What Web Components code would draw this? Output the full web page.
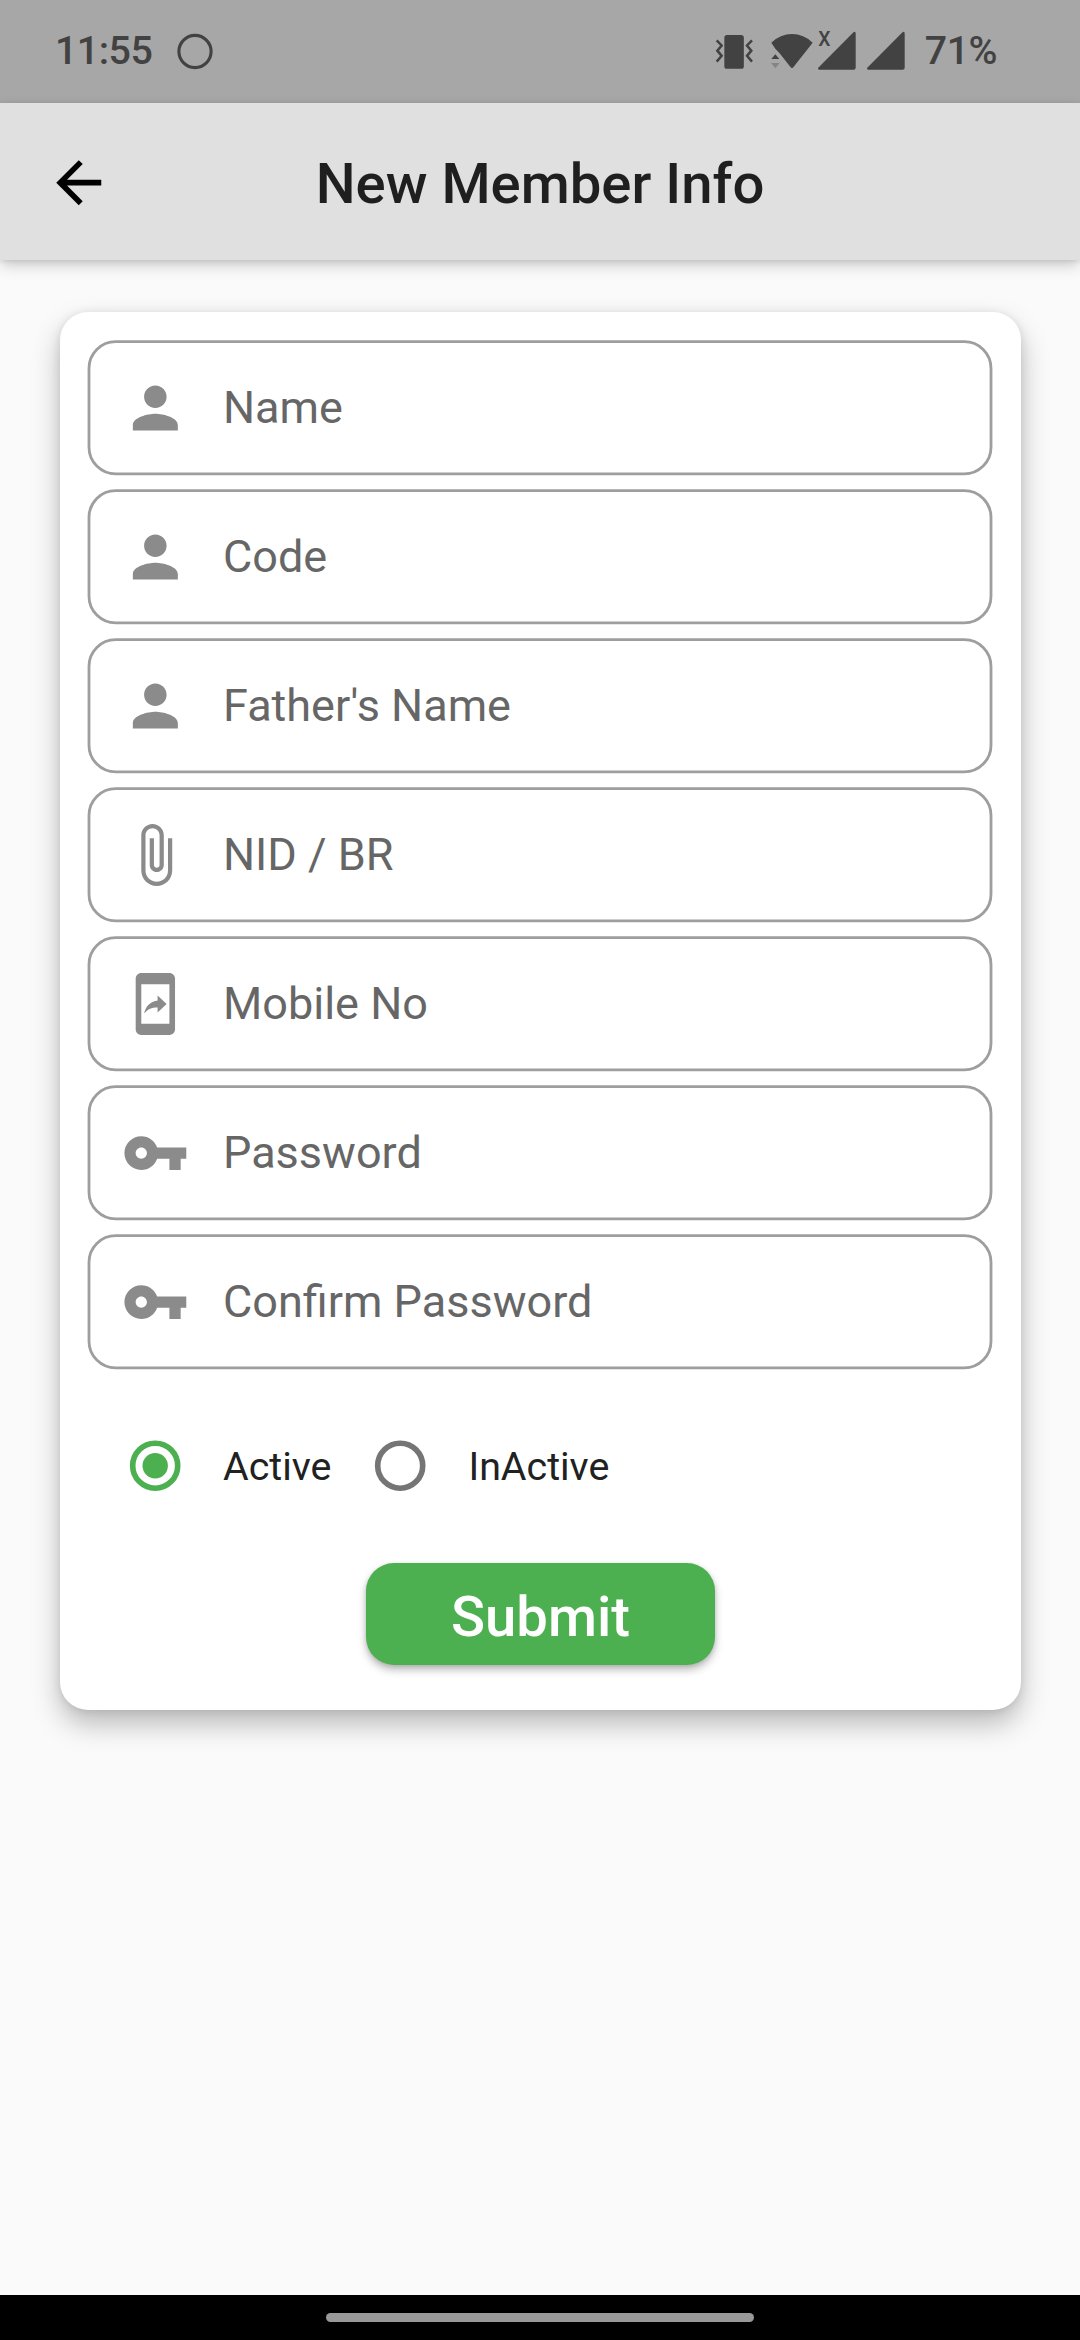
<!DOCTYPE html>
<html lang="en">
<head>
<meta charset="utf-8">
<title>New Member Info</title>
<style>
  html, body { margin: 0; height: 100%; }
  body { background: #fafafa; font-family: Roboto, "Liberation Sans", sans-serif; }
</style>
</head>
<body>
<member-screen></member-screen>
<script>
const define = (name, html, setup) => {
  const template = document.createElement('template');
  template.innerHTML = html;
  customElements.define(name, class extends HTMLElement {
    constructor() {
      super();
      this.attachShadow({ mode: 'open' }).append(template.content.cloneNode(true));
    }
    connectedCallback() { if (setup) setup(this, this.shadowRoot); }
  });
};

const ICONS = {
  person: 'M12 12c2.21 0 4-1.79 4-4s-1.79-4-4-4-4 1.79-4 4 1.79 4 4 4zm0 2c-2.67 0-8 1.34-8 4v2h16v-2c0-2.66-5.33-4-8-4z',
  attach: 'M16.5 6v11.5c0 2.21-1.79 4-4 4s-4-1.79-4-4V5c0-1.38 1.12-2.5 2.5-2.5s2.5 1.12 2.5 2.5v10.5c0 .55-.45 1-1 1s-1-.45-1-1V6H10v9.5c0 1.38 1.12 2.5 2.5 2.5s2.5-1.12 2.5-2.5V5c0-2.21-1.79-4-4-4S7 2.79 7 5v12.5c0 3.04 2.46 5.5 5.5 5.5s5.5-2.46 5.5-5.5V6h-1.5z',
  mobile: 'M17 1H7c-1.1 0-1.99.9-1.99 2v18c0 1.1.89 2 1.99 2h10c1.1 0 2-.9 2-2V3c0-1.1-.9-2-2-2zm0 18H7V5h10v14zm-4.2-5.78v1.75l3.2-2.99L12.8 9v1.7c-3.11.43-4.35 2.56-4.8 4.7 1.11-1.5 2.58-2.18 4.8-2.18z',
  key: 'M12.65 10C11.83 7.67 9.61 6 7 6c-3.31 0-6 2.69-6 6s2.69 6 6 6c2.61 0 4.83-1.67 5.65-4H17v4h4v-4h2v-4H12.65zM7 14c-1.1 0-2-.9-2-2s.9-2 2-2 2 .9 2 2-.9 2-2 2z',
  back: 'M20 11H7.83l5.59-5.59L12 4l-8 8 8 8 1.41-1.41L7.83 13H20v-2z'
};

customElements.define('md-icon', class extends HTMLElement {
  static get observedAttributes() { return ['name', 'dx', 'dy']; }
  constructor() {
    super();
    this.attachShadow({ mode: 'open' }).innerHTML = `
      <style>
        :host { display: block; width: 68px; height: 68px; flex: none; }
        svg { display: block; width: 68px; height: 68px; fill: currentColor; }
      </style>
      <svg viewBox="0 0 68 68"><path/></svg>`;
  }
  attributeChangedCallback() {
    const path = this.shadowRoot.querySelector('path');
    path.setAttribute('d', ICONS[this.getAttribute('name')] || '');
    path.setAttribute('transform', `translate(${this.getAttribute('dx') || 0} ${this.getAttribute('dy') || 0}) scale(2.8125)`);
  }
});

define('status-bar', `
  <style>
    :host { display: flex; align-items: center; height: 103px; box-sizing: border-box; padding: 0 83px 0 55px;
            background: #a7a7a7; color: #424242; font-size: 39.375px; font-weight: 500; line-height: 46px; letter-spacing: -.5px; }
    span { padding-bottom: 2px; }
    .clock { width: 100px; margin-right: 21px; }
    svg { display: block; }
    .system { margin-left: auto; margin-right: 17px; letter-spacing: 0; }
  </style>
  <span class="clock">11:55</span>
  <svg width="38" height="37" viewBox="0 0 38 37"><circle cx="19" cy="18.5" r="16.1" fill="none" stroke="currentColor" stroke-width="3.1"/></svg>
  <svg class="system" width="196" height="45" viewBox="66 87 588 135" fill="currentColor">
    <rect x="103" y="105" width="58.500" height="101.500" rx="8"/>
    <g fill="none" stroke="currentColor" stroke-width="7.500">
      <path d="M80 121l15 15.500L82 152l13 15.500L80 185"/>
      <path d="M186 121l-15 15.500L184 152l-13 15.500L186 185"/>
    </g>
    <path d="M244 128Q271 102 306 102T368 128L310 202Q306 207 302 202L270 161L256 146Z"/>
    <path d="M256 163l12 14h-24z"/>
    <path d="M256 205l13-16h-26z" fill="#858585"/>
    <path d="M384 204L489 98Q497 92 497 101V203Q497 209 491 209H388Q383 209 384 204Z"/>
    <path d="M531 204L636 98Q644 92 644 101V203Q644 209 638 209H535Q530 209 531 204Z"/>
    <text x="384.500" y="138" font-size="58" font-weight="500">X</text>
  </svg>
  <span>71%</span>`);

define('app-bar', `
  <style>
    :host { display: grid; grid-template-columns: 113px 1fr 113px; align-items: center; height: 157px; position: relative;
            background: #e0e0e0; box-shadow: 0 6px 14px -1px rgba(0,0,0,.2), 0 1px 5px rgba(0,0,0,.1); }
    md-icon { margin-left: 45px; color: #000; }
    h1 { margin: 0; padding-top: 5px; text-align: center; font-size: 56.25px; line-height: 66px; font-weight: 500;
         color: #1f1f1f; white-space: nowrap; }
  </style>
  <md-icon name="back" dx="0" dy=".9"></md-icon>
  <h1><slot></slot></h1>`);

define('text-field', `
  <style>
    :host { display: grid; width: 906px; height: 135px; }
    .outline, .content { grid-area: 1 / 1; }
    .outline { display: block; overflow: visible; }
    .content { display: flex; align-items: center; padding-left: 34px; color: #8b8b8b; }
    label { margin-left: 34px; color: #666; font-size: 45px; line-height: 52px; white-space: nowrap; }
  </style>
  <svg class="outline" width="906" height="136" viewBox="0 0 906 136"><rect x="2" y="1.7" width="902" height="132.2" rx="26.700" fill="none" stroke="#9e9e9e" stroke-width="2.8"/></svg>
  <div class="content"><md-icon dx=".6" dy=".3"></md-icon><label><slot></slot></label></div>`,
  (el, root) => root.querySelector('md-icon').setAttribute('name', el.getAttribute('icon')));

define('radio-option', `
  <style>
    :host { display: flex; align-items: center; color: #757575; }
    svg { display: block; width: 52px; height: 52px; }
    circle.dot { display: none; }
    :host([checked]) { color: #4caf50; }
    :host([checked]) circle.dot { display: block; }
    span { margin-left: 42px; padding-top: 1px; color: #212121; font-size: 39.375px; line-height: 47px; white-space: nowrap; }
  </style>
  <svg viewBox="0 0 52 52"><circle cx="26.200" cy="25.700" r="22.500" fill="none" stroke="currentColor" stroke-width="5.625"/><circle class="dot" cx="26.200" cy="25.700" r="12.700" fill="currentColor"/></svg>
  <span><slot></slot></span>`);

define('submit-button', `
  <style>
    :host { display: flex; justify-content: center; }
    button { all: unset; box-sizing: border-box; width: 349px; height: 102px; padding-top: 5px; border-radius: 28px;
             background: #4caf50; color: #fff; text-align: center; font-size: 56.25px; line-height: 98px; font-weight: 500;
             box-shadow: 0 5px 8px rgba(0,0,0,.26), 0 1px 4px rgba(0,0,0,.12); }
  </style>
  <button><slot></slot></button>`);

define('form-card', `
  <style>
    :host { display: flex; flex-direction: column; width: 961px; height: 1398px; box-sizing: border-box; padding: 28px 27px 0;
            border-radius: 28px; background: #fff;
            box-shadow: 0 14px 28px rgba(0,0,0,.26), 0 1px 10px rgba(0,0,0,.1); }
    .fields { display: flex; flex-direction: column; gap: 14px; }
    .status { display: flex; gap: 43px; margin: 71px 0 0 42px; }
    .action { margin-top: 71px; }
  </style>
  <div class="fields"><slot></slot></div>
  <div class="status"><slot name="status"></slot></div>
  <div class="action"><slot name="action"></slot></div>`);

define('gesture-bar', `
  <style>
    :host { display: flex; justify-content: center; align-items: center; height: 45px; background: #000; }
    div { width: 428px; height: 9px; border-radius: 5px; background: #999; }
  </style>
  <div></div>`);

define('member-screen', `
  <style>
    :host { display: flex; flex-direction: column; width: 1080px; height: 2340px; background: #fafafa; overflow: hidden; }
    main { flex: 1; padding: 52px 0 0 60px; }
  </style>
  <status-bar></status-bar>
  <app-bar>New Member Info</app-bar>
  <main>
    <form-card>
      <text-field icon="person">Name</text-field>
      <text-field icon="person">Code</text-field>
      <text-field icon="person">Father's Name</text-field>
      <text-field icon="attach">NID / BR</text-field>
      <text-field icon="mobile">Mobile No</text-field>
      <text-field icon="key">Password</text-field>
      <text-field icon="key">Confirm Password</text-field>
      <radio-option slot="status" checked>Active</radio-option>
      <radio-option slot="status">InActive</radio-option>
      <submit-button slot="action">Submit</submit-button>
    </form-card>
  </main>
  <gesture-bar></gesture-bar>`);
</script>
</body>
</html>
